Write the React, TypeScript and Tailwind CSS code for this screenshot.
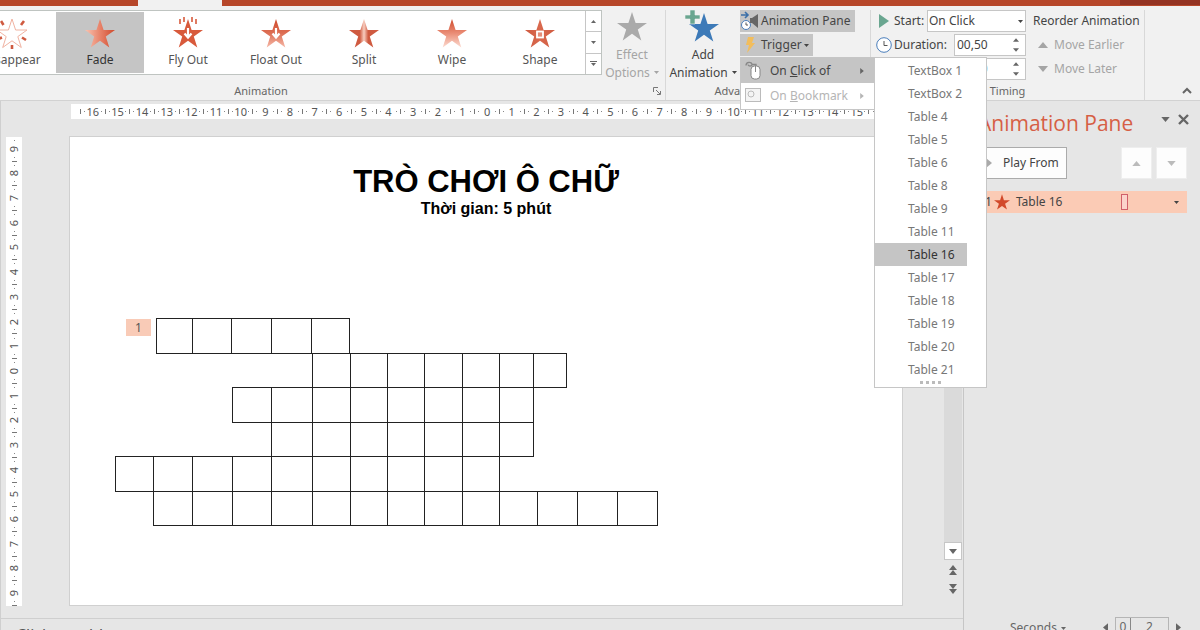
import React from 'react';

const STAR = '15,0 18.6,11 30,11 20.8,17.6 24.3,28.5 15,21.8 5.7,28.5 9.2,17.6 0,11 11.4,11';

type Effect = 'disappear' | 'fade' | 'fly' | 'float' | 'split' | 'wipe' | 'shape';

const EFFECTS: { id: Effect; label: string }[] = [
  { id: 'disappear', label: 'Disappear' },
  { id: 'fade', label: 'Fade' },
  { id: 'fly', label: 'Fly Out' },
  { id: 'float', label: 'Float Out' },
  { id: 'split', label: 'Split' },
  { id: 'wipe', label: 'Wipe' },
  { id: 'shape', label: 'Shape' },
];

const TRIGGER_TARGETS = [
  'TextBox 1', 'TextBox 2', 'Table 4', 'Table 5', 'Table 6', 'Table 8', 'Table 9',
  'Table 11', 'Table 16', 'Table 17', 'Table 18', 'Table 19', 'Table 20', 'Table 21',
];

// Crossword rows: left offset and the width of every cell
const CROSSWORD = [
  { left: 41, cells: [36, 39, 40, 40, 38] },
  { left: 197, cells: [38, 37, 37, 38, 37, 34, 33] },
  { left: 117, cells: [39, 41, 38, 37, 37, 38, 37, 34] },
  { left: 156, cells: [41, 38, 37, 37, 38, 37, 34] },
  { left: 0, cells: [38, 39, 40, 39, 41, 38, 37, 37, 38, 37] },
  { left: 38, cells: [39, 40, 39, 41, 38, 37, 37, 38, 37, 38, 40, 40, 40] },
];

const range = (max: number) => Array.from({ length: max * 2 + 1 }, (_, i) => Math.abs(i - max));

function EffectIcon({ effect }: { effect: Effect }) {
  const id = `grad-${effect}`;
  const vertical = effect === 'wipe' || effect === 'float';
  const stops: Record<Effect, [string, string, string]> = {
    disappear: ['#fff', '#fff', '#fff'],
    fade: ['#f9c4b2', '#e8836a', '#cf4a2c'],
    fly: ['#d85a3c', '#d85a3c', '#d85a3c'],
    float: ['#cf4a2c', '#dd6f55', '#f6b9a8'],
    split: ['#cf5a40', '#f8cdbf', '#cf5a40'],
    wipe: ['#cf4a2c', '#ea8d76', '#fcdcd2'],
    shape: ['#cf5a40', '#d9694e', '#cf5a40'],
  };
  const [a, b, c] = stops[effect];
  return (
    <svg width="36" height="34" viewBox="-3 -3 36 34" aria-hidden="true">
      <defs>
        <linearGradient id={id} x1="0" y1="0" x2={vertical ? '0' : '1'} y2={vertical ? '1' : '0'}>
          <stop offset="0" stopColor={a} />
          {effect === 'split' && <stop offset="0.36" stopColor={a} />}
          <stop offset="0.5" stopColor={b} />
          {effect === 'split' && <stop offset="0.64" stopColor={c} />}
          <stop offset="1" stopColor={c} />
        </linearGradient>
      </defs>
      {effect === 'disappear' ? (
        <g stroke="#cf5a40" fill="none">
          <polygon points={STAR} strokeWidth="1" stroke="#f0b3a2" />
          <path strokeWidth="2.6" d="M4 2l2.500 4M27 2l-3 4M1 20l4-1.500M29 21l-4-2.500M15 30v-4" />
        </g>
      ) : (
        <polygon points={STAR} fill={`url(#${id})`} />
      )}
      {effect === 'fly' && (
        <path d="M7 0v5M11 -2v5M19 -2v5M23 0v5" stroke="#d85a3c" strokeWidth="1.600" />
      )}
      {(effect === 'fly' || effect === 'float') && (
        <path d="M15 9v9M11.500 14.500l3.500 4 3.500-4" stroke="#fff" strokeWidth="2.200" fill="none" />
      )}
      {effect === 'shape' && <rect x="12" y="12.500" width="6" height="6" fill="#e58d78" stroke="#fff" strokeWidth="1.800" />}
    </svg>
  );
}

function Arrow({ up = false, className = '' }: { up?: boolean; className?: string }) {
  return (
    <svg viewBox="0 0 10 6" className={`shrink-0 ${className}`} fill="currentColor" aria-hidden="true">
      <path d={up ? 'M0 6L5 0l5 6z' : 'M0 0h10L5 6z'} />
    </svg>
  );
}

function RightArrow({ className = '' }: { className?: string }) {
  return (
    <svg viewBox="0 0 6 10" className={`shrink-0 ${className}`} fill="currentColor" aria-hidden="true">
      <path d="M0 0l6 5-6 5z" />
    </svg>
  );
}

function Clock({ className = '' }: { className?: string }) {
  return (
    <svg viewBox="0 0 16 16" className={`shrink-0 ${className}`} fill="#fff" stroke="#4a7ebb" aria-hidden="true">
      <circle cx="8" cy="8" r="7.300" />
      <path d="M8 4v4.500h3.500" fill="none" stroke="#555" />
    </svg>
  );
}

function Spinner({ id, label, value }: { id: string; label: string; value: string }) {
  return (
    <div className="flex h-[22px] w-[72px] border border-[#c6c6c6] bg-white">
      <input id={id} aria-label={label} defaultValue={value} className="w-[52px] min-w-0 pl-[2px] text-xs outline-none" />
      <span className="flex flex-1 flex-col items-center justify-center gap-[6px] text-[#666]">
        <button type="button" aria-label={`Increase ${label}`}><Arrow up className="h-[4px] w-[6px]" /></button>
        <button type="button" aria-label={`Decrease ${label}`}><Arrow className="h-[4px] w-[6px]" /></button>
      </span>
    </div>
  );
}

function GroupLabel({ children }: { children: React.ReactNode }) {
  return <div className="flex h-[18px] items-center justify-center text-[11px] text-[#666]">{children}</div>;
}

function TriggerMenu() {
  return (
    <div className="absolute top-[23px] left-0 z-20 w-[135px] border border-[#c6c6c6] bg-white">
      <button type="button" className="flex h-[25px] w-full items-center bg-[#c5c5c5] pr-[10px] pl-1 text-left">
        <svg width="20" height="20" viewBox="0 0 20 20" fill="none" stroke="#888" aria-hidden="true">
          <path d="M1 4.500c0-4 6-4 6-1 0 2-4 2-4 0M7 3.500h4V5" strokeWidth="1.300" />
          <rect x="6" y="5" width="9" height="13" rx="3.500" fill="#fff" />
          <path d="M10.500 5v6" />
        </svg>
        <span className="flex-1 pl-[5px]">On <u>C</u>lick of</span>
        <RightArrow className="h-[6px] w-[4px] text-[#666]" />
      </button>
      <button type="button" disabled className="flex h-[26px] w-full items-center pr-[10px] pl-1 text-left text-[#b5b5b5]">
        <svg width="20" height="18" viewBox="0 0 20 18" fill="none" stroke="#bbb" aria-hidden="true">
          <rect x="0.500" y="1.500" width="15" height="13" fill="#f4f4f4" />
          <circle cx="6" cy="7" r="3" />
        </svg>
        <span className="flex-1 pl-[5px]">On <u>B</u>ookmark</span>
        <RightArrow className="h-[6px] w-[4px]" />
      </button>
      <div className="absolute -top-px left-[133px] w-[113px] border border-[#c6c6c6] bg-white pt-px">
        {TRIGGER_TARGETS.map((name) => (
          <button
            key={name}
            type="button"
            className={`block h-[23px] pl-[33px] text-left leading-[23px] whitespace-nowrap ${
              name === 'Table 16' ? 'w-[92px] bg-[#c5c5c5] text-[#333]' : 'w-full text-[#777]'
            }`}
          >
            {name}
          </button>
        ))}
        <div className="flex h-[6px] justify-center gap-[3px]">
          {[0, 1, 2, 3].map((dot) => (
            <span key={dot} className="h-[3px] w-[3px] bg-[#bbb]" />
          ))}
        </div>
      </div>
    </div>
  );
}

function Ribbon() {
  return (
    <header className="flex h-[95px] shrink-0 border-b border-[#d2d2d2] bg-[#f1f1f1] pt-1 text-xs text-[#444]">
      {/* Animation */}
      <section className="flex w-[666px] shrink-0 flex-col border-r border-[#d8d8d8]">
        <div className="flex flex-1">
          <div className="flex h-[65px] w-[602px] border border-l-0 border-[#bfc4c1] bg-white">
            <div className="flex flex-1 justify-end overflow-hidden pr-px">
              {EFFECTS.map(({ id, label }) => (
                <button
                  key={id}
                  type="button"
                  className={`flex w-[88px] shrink-0 flex-col items-center pt-1 ${
                    id === 'fade' ? 'my-px bg-[#c5c5c5] text-[#333]' : 'mt-px text-[#555]'
                  }`}
                >
                  <EffectIcon effect={id} />
                  <span className="leading-5">{label}</span>
                </button>
              ))}
            </div>
            <div className="flex w-4 flex-col divide-y divide-[#c6c6c6] border-l border-[#c6c6c6] text-[#666]">
              <button type="button" aria-label="Previous effects" className="flex flex-1 items-center justify-center">
                <Arrow up className="h-[3px] w-[5px]" />
              </button>
              <button type="button" aria-label="Next effects" className="flex flex-1 items-center justify-center">
                <Arrow className="h-[3px] w-[5px]" />
              </button>
              <button type="button" aria-label="More effects" className="flex flex-1 flex-col items-center justify-center gap-px">
                <span className="h-px w-[7px] bg-[#666]" />
                <Arrow className="h-[3px] w-[5px]" />
              </button>
            </div>
          </div>
          <button type="button" disabled className="flex flex-1 flex-col items-center pt-[2px] pr-[3px] text-[#a5a5a5]">
            <svg width="30" height="29" viewBox="0 0 30 29" fill="#aaa" aria-hidden="true"><polygon points={STAR} /></svg>
            <span className="mt-[5px] leading-[18px]">Effect</span>
            <span className="flex items-center gap-1 leading-[17px]">Options <Arrow className="h-[3px] w-[5px]" /></span>
          </button>
        </div>
        <div className="flex items-center">
          <div className="w-[522px]"><GroupLabel>Animation</GroupLabel></div>
          <button type="button" aria-label="Animation settings" className="mr-1 ml-auto text-[#777]">
            <svg width="8" height="8" viewBox="0 0 8 8" fill="none" stroke="currentColor"><path d="M.5 5V.5H5M3 3l4 4M7.500 4v3.500H4" /></svg>
          </button>
        </div>
      </section>

      {/* Advanced Animation */}
      <section className="flex w-[205px] shrink-0 flex-col border-r border-[#d8d8d8]">
        <div className="flex flex-1">
          <button type="button" className="flex w-[74px] flex-col items-center">
            <svg width="36" height="33" viewBox="0 0 36 33" aria-hidden="true">
              <polygon points={STAR} fill="#3d7ab8" transform="translate(4 3)" />
              <path d="M5 0h5v5h5v4h-5v5H5V9H0V5h5z" fill="#6aa690" stroke="#f1f1f1" strokeWidth="0.600" />
            </svg>
            <span className="mt-[3px] leading-[18px]">Add</span>
            <span className="flex items-center gap-1 leading-[17px]">Animation <Arrow className="h-[3px] w-[5px]" /></span>
          </button>
          <div className="flex flex-col items-start gap-[2px]">
            <button type="button" className="flex h-[22px] items-center bg-[#c5c5c5] pr-1 whitespace-nowrap">
              <svg width="21" height="20" viewBox="0 0 21 20" aria-hidden="true">
                <path d="M1 4h6M5 1l3 3-3 3" fill="none" stroke="#3b6fa8" strokeWidth="1.600" />
                <circle cx="6" cy="14" r="4.500" fill="#fff" stroke="#4a7ebb" />
                <path d="M6 11.500V14h2" fill="none" stroke="#555" />
                <path d="M10 7h2l6-4v14l-6-5h-2z" fill="#666" />
              </svg>
              Animation Pane
            </button>
            <div className="relative">
              <button type="button" className="flex h-[22px] items-center bg-[#c5c5c5] pr-1">
                <svg width="21" height="20" viewBox="0 0 21 20" fill="#f2bd5c" aria-hidden="true">
                  <path d="M8 2h6l-2 6h3L7 18l2-8H6z" />
                </svg>
                Trigger <Arrow className="ml-[2px] h-[3px] w-[5px]" />
              </button>
              <TriggerMenu />
            </div>
          </div>
        </div>
        <GroupLabel>Advanced Animation</GroupLabel>
      </section>

      {/* Timing */}
      <section className="flex w-[274px] shrink-0 flex-col border-r border-[#d8d8d8]">
        <div className="flex flex-1">
          <div className="flex w-[155px] flex-col gap-[2px] pl-[5px]">
            <div className="flex h-[22px] items-center">
              <svg width="18" height="14" viewBox="0 0 18 14" fill="#6aa690" aria-hidden="true"><path d="M3 0l10 7-10 7z" /></svg>
              <label htmlFor="start" className="flex-1">Start:</label>
              <span className="relative flex w-[99px] items-center">
                <select id="start" className="h-[22px] w-full appearance-none border border-[#c6c6c6] bg-white pl-px outline-none">
                  <option>On Click</option>
                </select>
                <Arrow className="pointer-events-none absolute right-[3px] h-[3px] w-[5px]" />
              </span>
            </div>
            <div className="flex h-[22px] items-center">
              <Clock className="mr-[2px] h-4 w-4" />
              <label htmlFor="duration" className="flex-1">Duration:</label>
              <Spinner id="duration" label="Duration" value="00,50" />
            </div>
            <div className="flex h-[22px] items-center">
              <Clock className="mr-[2px] h-4 w-4" />
              <label htmlFor="delay" className="flex-1">Delay:</label>
              <Spinner id="delay" label="Delay" value="00,00" />
            </div>
          </div>
          <div className="flex flex-col gap-[2px] pl-[7px] whitespace-nowrap">
            <div className="leading-[22px]">Reorder Animation</div>
            <button type="button" disabled className="flex h-[22px] items-center gap-[6px] pl-[5px] text-[#a5a5a5]">
              <Arrow up className="h-[6px] w-[10px]" /> Move Earlier
            </button>
            <button type="button" disabled className="flex h-[22px] items-center gap-[6px] pl-[5px] text-[#a5a5a5]">
              <Arrow className="h-[6px] w-[10px]" /> Move Later
            </button>
          </div>
        </div>
        <GroupLabel>Timing</GroupLabel>
      </section>

      <button type="button" aria-label="Collapse ribbon" className="mt-auto mr-2 mb-[6px] ml-auto text-[#666]">
        <svg width="10" height="7" viewBox="0 0 10 7" fill="none" stroke="currentColor" strokeWidth="2"><path d="M1 6l4-4 4 4" /></svg>
      </button>
    </header>
  );
}

function HorizontalRuler() {
  return (
    <div className="ml-[2px] flex h-[15px] items-center bg-white px-[9px] text-[11px] text-[#555]">
      <span className="h-[5px] w-px bg-[#777]" />
      {range(16).map((n, i) => (
        <span key={i} className="flex h-full min-w-0 flex-1 items-center justify-between">
          <span className="ml-[3px] h-px w-px bg-[#888]" />
          <span className="leading-[15px]">{n}</span>
          <span className="flex items-center gap-[3px]">
            <span className="h-px w-px bg-[#888]" />
            <span className="h-[5px] w-px bg-[#777]" />
          </span>
        </span>
      ))}
    </div>
  );
}

function VerticalRuler() {
  return (
    <div className="mt-9 mb-3 ml-[5px] flex w-4 shrink-0 flex-col items-center bg-white text-[11px] text-[#555]">
      {range(9).map((n, i) => (
        <span key={i} className="flex min-h-0 w-full flex-1 flex-col items-center justify-between">
          <span className="mt-[3px] h-px w-px bg-[#888]" />
          <span className="rotate-180 leading-4 [writing-mode:vertical-rl]">{n}</span>
          <span className="flex flex-col items-center gap-[3px]">
            <span className="h-px w-px bg-[#888]" />
            <span className="h-px w-[5px] bg-[#777]" />
          </span>
        </span>
      ))}
    </div>
  );
}

function Slide() {
  return (
    <main className="mt-[17px] mb-3 flex-1 border border-[#d0d0d0] bg-white font-['Liberation_Sans',Arial,sans-serif] text-black">
      <h1 className="pt-[27px] text-center text-[31px] leading-9 font-bold">TRÒ CHƠI Ô CHỮ</h1>
      <p className="text-center text-[16px] leading-[18px] font-bold">Thời gian: 5 phút</p>
      <div className="relative mt-[100px] ml-[45px] flex h-[207px] flex-col">
        <span className="absolute top-px left-[11px] flex h-[17px] w-[25px] items-center justify-center bg-[#f9cbb7] font-['Noto_Sans',sans-serif] text-xs text-[#555]">
          1
        </span>
        {CROSSWORD.map((row, r) => (
          <div key={r} className="flex min-h-0 flex-1" style={{ marginLeft: row.left }}>
            {row.cells.map((width, c) => (
              <span key={c} className="-mb-px shrink-0" style={{ width }}>
                <span className="-mr-px block h-full border border-[#222]" />
              </span>
            ))}
          </div>
        ))}
      </div>
    </main>
  );
}

function ScrollBar() {
  return (
    <div className="ml-[41px] flex w-[18px] shrink-0 flex-col items-center pb-6 text-[#666]">
      <div className="w-full flex-1 bg-[#dadada]" />
      <button type="button" aria-label="Scroll down" className="flex h-[18px] w-full items-center justify-center border border-[#c6c6c6] bg-white">
        <Arrow className="h-[5px] w-[8px]" />
      </button>
      <button type="button" aria-label="Previous slide" className="mt-[5px] flex h-[10px] flex-col">
        <Arrow up className="h-[5px] w-[8px]" /><Arrow up className="h-[5px] w-[8px]" />
      </button>
      <button type="button" aria-label="Next slide" className="mt-[9px] flex h-[10px] flex-col">
        <Arrow className="h-[5px] w-[8px]" /><Arrow className="h-[5px] w-[8px]" />
      </button>
    </div>
  );
}

function AnimationPane() {
  return (
    <aside className="flex w-[237px] shrink-0 flex-col border-l border-[#c6c6c6] pr-[13px] pl-[14px] text-xs text-[#444]">
      <div className="flex h-[46px] items-center">
        <h2 className="flex-1 pb-[2px] font-['Open_Sans',sans-serif] text-[21px] whitespace-nowrap text-[#d65f45]">Animation Pane</h2>
        <button type="button" aria-label="Pane options" className="mr-2 mb-[9px] text-[#666]"><Arrow className="h-[5px] w-[9px]" /></button>
        <button type="button" aria-label="Close pane" className="-mr-[2px] mb-[9px] text-[#666]">
          <svg width="11" height="11" viewBox="0 0 11 11" stroke="currentColor" strokeWidth="2.400"><path d="M1 1l9 9M10 1l-9 9" /></svg>
        </button>
      </div>
      <div className="flex h-8 gap-1">
        <button type="button" className="mr-auto flex w-[89px] items-center gap-[11px] border border-[#ababab] bg-[#fdfdfd] pl-[7px] whitespace-nowrap">
          <RightArrow className="h-[10px] w-[6px] text-[#aaa]" /> Play From
        </button>
        <button type="button" aria-label="Move up" className="flex w-[31px] items-center justify-center border border-[#eee] bg-[#fdfdfd] text-[#bbb]">
          <Arrow up className="h-[5px] w-[9px]" />
        </button>
        <button type="button" aria-label="Move down" className="flex w-[31px] items-center justify-center border border-[#eee] bg-[#fdfdfd] text-[#bbb]">
          <Arrow className="h-[5px] w-[9px]" />
        </button>
      </div>
      <div className="mt-3 flex h-[22px] items-center bg-[#fbcbb5] pr-2 pl-[7px]">
        <span>1</span>
        <svg width="16" height="16" viewBox="0 0 30 29" className="mx-[2px]" fill="#d2492a" aria-hidden="true"><polygon points={STAR} /></svg>
        <span className="flex-1 pl-1">Table 16</span>
        <span className="mr-[46px] h-4 w-[7px] border border-[#d0606a] bg-[#fbd3cb]" />
        <button type="button" aria-label="Table 16 options"><Arrow className="h-[3px] w-[5px]" /></button>
      </div>
      <div className="mt-auto flex h-[13px] overflow-hidden text-[#666]">
        <button type="button" className="ml-8 flex h-[22px] items-center gap-1 leading-[22px]">
          Seconds <Arrow className="h-[3px] w-[5px]" />
        </button>
        <RightArrow className="mt-[6px] mr-[7px] ml-auto h-[9px] w-[5px] rotate-180" />
        <div className="flex h-[22px] w-[54px] border border-[#b5b5b5] leading-[18px]">
          <span className="w-[15px] border-r border-[#888] text-center">0</span>
          <span className="flex-1 text-center">2</span>
        </div>
        <RightArrow className="mt-[6px] mr-[6px] ml-[7px] h-[9px] w-[5px]" />
      </div>
    </aside>
  );
}

export default function App() {
  return (
    <div className="flex h-screen flex-col overflow-hidden bg-[#e6e6e6] font-['Noto_Sans',sans-serif]">
      <div className="flex h-[6px] shrink-0 bg-[#b7472a]">
        <span className="ml-[138px] w-[84px] bg-[#f1f1f1]" />
        <span className="mb-px ml-auto w-20 bg-[#943322]" />
      </div>
      <Ribbon />
      <div className="flex min-h-0 flex-1">
        <div className="flex min-w-0 flex-1 flex-col border-l border-[#cfcfcf]">
          <div className="flex min-h-0 flex-1">
            <VerticalRuler />
            <div className="ml-[47px] flex min-w-0 flex-1 flex-col pt-[3px]">
              <HorizontalRuler />
              <Slide />
            </div>
            <ScrollBar />
            <div className="w-px" />
          </div>
          <div className="h-3 shrink-0 overflow-hidden border-t border-[#cfcfcf] pt-[6px] pl-[15px] leading-5 text-[#555]">
            Click to add notes
          </div>
        </div>
        <AnimationPane />
      </div>
    </div>
  );
}
